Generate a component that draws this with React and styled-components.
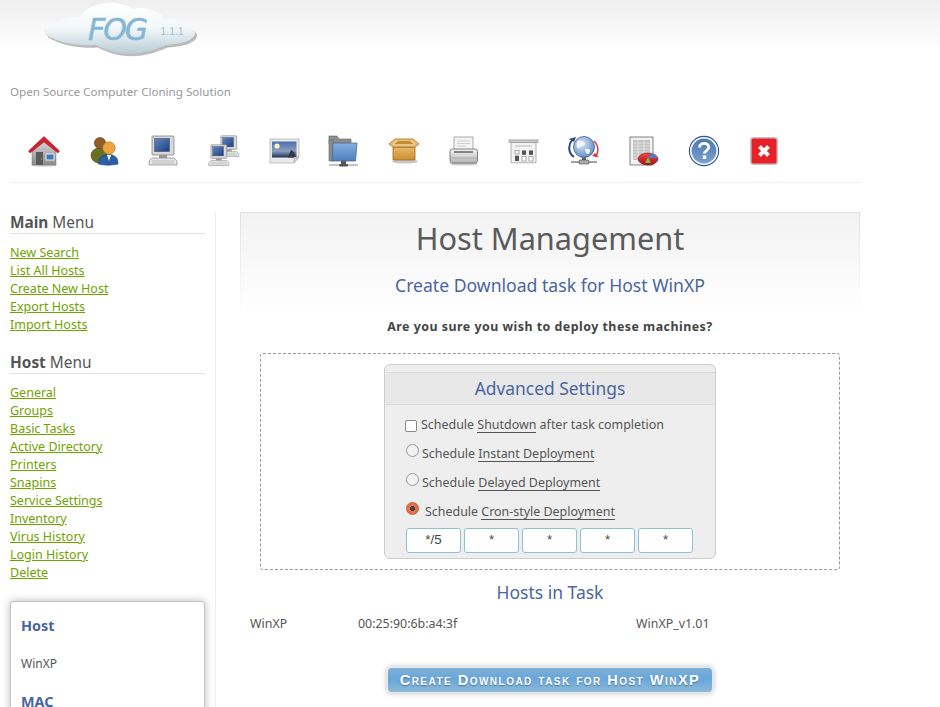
import React from "react";
import styled, { createGlobalStyle } from "styled-components";

const Global = createGlobalStyle`
  html, body { margin: 0; padding: 0; height: 100%; overflow: hidden; background: #fff; }
  body { font-family: "Noto Sans", "Open Sans", "DejaVu Sans", sans-serif; color: #555; font-size: 13px; }
  #root { height: 100%; }
`;

const Page = styled.div`
  height: 707px; overflow: hidden;
  background: linear-gradient(#eeeeee 0, #ffffff 50px) no-repeat;
  padding: 0 80px 0 10px;
`;
const Header = styled.header`
  height: 183px; display: flex; flex-direction: column;
  border-bottom: 1px solid #eeeeee;
  box-sizing: border-box;
`;
const LogoWrap = styled.div`margin: 0 0 0 32px; height: 62px;`;
const Tagline = styled.div`
  font-size: 11.6px; line-height: 18px; color: #999; margin-top: 21px;
`;
const IconBar = styled.nav`
  display: flex; margin: 34px 0 0 18px; gap: 28px;
`;
const IconLink = styled.a`display: block; width: 32px; height: 32px;`;

const Body = styled.div`display: flex; margin-top: 29px;`;
const Side = styled.aside`
  flex: none; box-sizing: border-box; padding-right: 10px; width: 206px;
  border-right: 1px solid #eeeeee; min-height: 520px;
`;
const MenuTitle = styled.h3`
  margin: 0 0 10px; padding: 0; width: 195px; font-size: 15.4px; line-height: 22px; font-weight: 400; color: #555;
  border-bottom: 1px solid #e2e2e2; height: 21px;
  b { font-weight: 700; }
`;
const MenuList = styled.ul`
  list-style: none; margin: 0 0 18px; padding: 0;
`;
const MenuLink = styled.li`
  height: 18px; line-height: 18px; font-size: 12.5px; color: #6fa300; text-decoration: underline;
`;
const Card = styled.div`
  margin-top: 19px; width: 195px; box-sizing: border-box; height: 200px; padding: 14px 10px;
  background: #fff; border: 1px solid #c4c4c4; border-radius: 3px;
  box-shadow: 0 0 8px rgba(0,0,0,.28);
`;
const CardHead = styled.div`
  font-size: 14.4px; line-height: 20px; font-weight: 700; color: #4a65a0;
`;
const CardValue = styled.div`
  font-size: 12px; line-height: 18px; color: #555; margin: 19px 0 19px;
`;

const Main = styled.main`
  width: 620px; margin-left: 24px; flex: none; text-align: center;
`;
const TitleBox = styled.div`
  height: 103px; box-sizing: border-box;
  border: 1px solid #e4e4e4; border-bottom: 0;
  border-image: linear-gradient(#e0e0e0, #ffffff) 1;
  background: linear-gradient(#f2f2f2, #ffffff);
  padding-top: 5px;
`;
const Title = styled.h1`
  margin: 0; font-size: 30.7px; line-height: 40px; font-weight: 400; color: #5a5a5a;
`;
const Sub = styled.h2`
  margin: 14px 0 0; font-size: 17.6px; line-height: 26px; font-weight: 400; color: #4a65a0;
`;
const Confirm = styled.p`
  margin: 3px 0 17px; font-size: 12.4px; line-height: 18px; font-weight: 700; color: #444; letter-spacing: .49px;
`;
const Dashed = styled.div`
  margin: 0 20px; height: 217px; box-sizing: border-box; padding-top: 10px;
  border: 1px dashed #999; border-radius: 3px;
`;
const Panel = styled.div`
  width: 332px; height: 195px; margin: 0 auto; box-sizing: border-box; padding-top: 7px;
  background: #eeeeee; border: 1px solid #cccccc; border-radius: 6px; text-align: left;
`;
const PanelHead = styled.div`
  height: 31px; line-height: 31px; text-align: center; font-size: 17.4px; color: #4a65a0;
  background: #e8e8e8; border-top: 1px solid #dcdcdc; border-bottom: 1px solid #dcdcdc;
`;
const Options = styled.div`padding: 10px 0 0 21px; display: flex; flex-direction: column;`;
const Option = styled.label`
  height: 29px; display: flex; align-items: flex-start; font-size: 12.45px; line-height: 20px; color: #555;
  gap: ${p => p.$gap}px;
`;
const Check = styled.span`
  width: 10px; height: 10px; margin: 5px 0 0 -1px; background: #fff; border: 1px solid #888; border-radius: 2px; flex: none;
`;
const Radio = styled.span`
  width: 11px; height: 11px; margin-top: 0; border-radius: 50%; flex: none; background: #f2f2f2; border: 1px solid #999;
  ${p => p.$on && `
    background: radial-gradient(circle, #444 0 2.2px, #e2714a 2.8px);
    border-color: #cc5c36;
  `}
`;
const Under = styled.span`
  display: inline-block; line-height: 15px; border-bottom: 1px solid #555;
`;
const CronRow = styled.div`display: flex; gap: 3px; margin-top: -3px;`;
const Cron = styled.div`
  width: 55px; height: 25px; box-sizing: border-box; background: #fff; border: 1px solid #8cc1d6; border-radius: 3px;
  font: 13.3px/22px "Liberation Sans", Arial, sans-serif; color: #444; text-align: center;
`;
const HostsHead = styled.h2`
  margin: 9px 0 0; font-size: 17.5px; line-height: 26px; font-weight: 400; color: #4a65a0;
`;
const HostRow = styled.div`
  display: grid; grid-template-columns: 108px 278px 1fr; margin-top: 9px; padding-left: 10px; text-align: left;
  font-size: 12.4px; line-height: 20px; color: #555; height: 20px;
`;
const SubmitBtn = styled.button`
  display: block; margin: 32px 0 0 146px; width: 328px; height: 28px; padding: 0;
  font: 700 14.6px/24px "Liberation Sans", Arial, sans-serif; font-variant: small-caps; letter-spacing: 1.47px;
  color: #fff; text-shadow: 0 1px 1px rgba(0,0,0,.35);
  background: linear-gradient(#7fb0d6, #68a6dc 45%, #8dbad6);
  border: 2px solid #e6e6e6; border-radius: 6px; box-shadow: 0 0 5px rgba(0,0,0,.22);
  white-space: nowrap;
`;

const cloud = "M2 30C4 24 20 18 38 17C42 9 52 4 66 3C76 2 86 6 92 9C102 6 116 10 122 18C136 20 150 25 153 32C154 40 140 44 124 45C112 50 96 56 78 53C68 52 60 48 54 45C40 46 22 44 10 38C5 36 2 33 2 30Z";

const Logo = () => (
  <svg width="160" height="62" viewBox="0 0 160 62">
    <defs>
      <linearGradient id="cl" x1="0" y1="0" x2="0" y2="1">
        <stop offset="0" stopColor="#ffffff" /><stop offset=".5" stopColor="#f2f7f9" /><stop offset="1" stopColor="#b9cdd6" />
      </linearGradient>
    </defs>
    <path transform="translate(2 2.5)" fill="#8f8f8f" opacity=".6" d={cloud} />
    <path fill="url(#cl)" d={cloud} />
    <text x="46" y="40" fontFamily="DejaVu Sans" fontStyle="italic" fontSize="30" fill="#86b6d5" stroke="#86b6d5" strokeWidth=".5" textLength="60" lengthAdjust="spacing">FOG</text>
    <text x="118.5" y="35" fontFamily="Liberation Sans" fontSize="10" fill="#a3bfcd" letterSpacing=".2">1.1.1</text>
  </svg>
);

const I = ({ children }) => <IconLink><svg width="32" height="32" viewBox="0 0 32 32">{children}</svg></IconLink>;

const Home = () => (
  <I>
    <defs><linearGradient id="hw" x1="0" y1="0" x2="0" y2="1"><stop offset="0" stopColor="#d8d8d8" /><stop offset="1" stopColor="#8c8c8c" /></linearGradient></defs>
    <ellipse cx="16" cy="30" rx="13" ry="1.6" fill="#ccc" />
    <path d="M4 14 16 5 28 14V30H4Z" fill="url(#hw)" stroke="#777" strokeWidth=".5" />
    <path d="M0.5 16 16 1.5 31.5 16 30 18 16 7 2 18Z" fill="#d3212c" stroke="#a51520" strokeWidth=".5" />
    <rect x="8" y="17" width="7" height="13" fill="#5b5b5b" />
    <rect x="18" y="19" width="8" height="6" fill="#3f78b8" stroke="#e8e8e8" />
    <circle cx="13.5" cy="24" r=".6" fill="#d8c24a" />
  </I>
);
const Users = () => (
  <I>
    <ellipse cx="11" cy="20.5" rx="8" ry="7.5" fill="#66701e" stroke="#444c12" strokeWidth=".6" />
    <circle cx="12" cy="8" r="5.6" fill="#8f5e22" stroke="#5e3c12" strokeWidth=".6" />
    <path d="M10.5 29C10.5 22 14 19.5 21 19.5C27 19.5 30 23 30 29C24 30.5 16 30.5 10.5 29Z" fill="#2a5ea6" stroke="#1c3f75" strokeWidth=".6" />
    <path d="M19 20 21 26 23 20Z" fill="#fff" />
    <circle cx="21" cy="13" r="6.2" fill="#eda43e" stroke="#b4741e" strokeWidth=".6" />
  </I>
);
const Monitor = ({ id, x = 0, y = 0, s = 1 }) => (
  <g transform={`translate(${x} ${y}) scale(${s})`}>
    <rect x="4" y="1" width="22" height="19" rx="1" fill="#d8d8d8" stroke="#777" strokeWidth=".7" />
    <rect x="6.5" y="3.5" width="15" height="13" fill={`url(#${id})`} stroke="#444" strokeWidth=".5" />
    <rect x="11" y="20" width="8" height="3" fill="#999" />
    <path d="M1 26 4 23H26L29 26V30H1Z" fill="#e4e4e4" stroke="#888" strokeWidth=".7" />
    <path d="M4 26H26M4 28H26" stroke="#aaa" strokeWidth=".6" />
    <defs><linearGradient id={id} x1="0" y1="0" x2="1" y2="1"><stop offset="0" stopColor="#5e86c4" /><stop offset="1" stopColor="#1f3f82" /></linearGradient></defs>
  </g>
);
const Host = () => <I><Monitor id="m1" /></I>;
const Group = () => (
  <I>
    <Monitor id="m2" x={10} y={0} s={0.72} />
    <Monitor id="m3" x={0} y={9} s={0.72} />
  </I>
);
const Image = () => (
  <I>
    <defs>
      <linearGradient id="im" x1="0" y1="0" x2="0" y2="1"><stop offset="0" stopColor="#4d6ea8" /><stop offset=".6" stopColor="#8a9cc0" /><stop offset="1" stopColor="#1f2f55" /></linearGradient>
    </defs>
    <path d="M2 4H31V22L26 28H2Z" fill="#eaeaea" stroke="#aaa" strokeWidth=".7" />
    <rect x="4" y="6.5" width="24.5" height="16" fill="url(#im)" />
    <circle cx="9" cy="11" r="2.6" fill="#f4f6c8" />
    <path d="M20 22.5 23 15 26 17 28 22.5Z" fill="#33384a" />
    <path d="M26 28 31 22H26Z" fill="#ccc" stroke="#999" strokeWidth=".4" />
  </I>
);
const Folder = () => (
  <I>
    <defs><linearGradient id="fo" x1="0" y1="0" x2="0" y2="1"><stop offset="0" stopColor="#86afe0" /><stop offset="1" stopColor="#4d7fbe" /></linearGradient></defs>
    <path d="M1 1H9L11 4H23V9H1Z" fill="#8c8c8c" stroke="#666" strokeWidth=".6" />
    <rect x="1" y="5" width="4" height="21" fill="#8c8c8c" stroke="#666" strokeWidth=".6" />
    <path d="M5 8H29L27.5 26H4Z" fill="url(#fo)" stroke="#3a5f92" strokeWidth=".7" />
    <rect x="13" y="26" width="5" height="3" fill="#555" />
    <path d="M1 30H30" stroke="#888" strokeWidth="1" />
    <rect x="11" y="29" width="9" height="2.4" rx="1" fill="#555" />
  </I>
);
const Box = () => (
  <I>
    <defs><linearGradient id="bx" x1="0" y1="0" x2="0" y2="1"><stop offset="0" stopColor="#e9b968" /><stop offset="1" stopColor="#cc8f30" /></linearGradient></defs>
    <ellipse cx="17" cy="26.5" rx="13" ry="2" fill="#c8c8c8" />
    <path d="M5 12H27V25H5Z" fill="url(#bx)" stroke="#a06d1c" strokeWidth=".8" />
    <path d="M5 12 1 9 7 4H25L31 9 27 12Z" fill="#eac581" stroke="#a06d1c" strokeWidth=".8" />
    <path d="M7 9H25L22 6H10Z" fill="#c48a32" />
  </I>
);
const Printer = () => (
  <I>
    <defs><linearGradient id="pr" x1="0" y1="0" x2="0" y2="1"><stop offset="0" stopColor="#f4f4f4" /><stop offset="1" stopColor="#b4b4b4" /></linearGradient></defs>
    <ellipse cx="16" cy="29" rx="14" ry="1.6" fill="#ccc" />
    <path d="M6 2H25V15H6Z" fill="#f4f4f4" stroke="#888" strokeWidth=".7" />
    <path d="M9 6H22M9 8.5H22M9 11H18" stroke="#ccc" strokeWidth=".9" />
    <rect x="2" y="14" width="27.5" height="14" rx="2.4" fill="url(#pr)" stroke="#666" strokeWidth=".8" />
    <path d="M6 17H25" stroke="#444" strokeWidth="1.2" />
    <path d="M3 23H29" stroke="#999" strokeWidth=".6" />
  </I>
);
const Config = () => (
  <I>
    <g transform="translate(0 4) scale(1 .88)">
      <path d="M1 1H30V4H1Z" fill="#c8c8c8" stroke="#888" strokeWidth=".6" />
      <path d="M3 4H28V27H3Z" fill="#f2f2f2" stroke="#999" strokeWidth=".8" />
      <path d="M7 8H24" stroke="#bbb" strokeWidth="1" />
      <rect x="7" y="13" width="4" height="4" fill="#fff" stroke="#888" strokeWidth=".7" />
      <rect x="7" y="19" width="4" height="6" fill="#555" />
      <rect x="14" y="13" width="4" height="5" fill="#555" />
      <rect x="14" y="20" width="4" height="5" fill="#fff" stroke="#888" strokeWidth=".7" />
      <rect x="21" y="13" width="4" height="5" fill="#555" />
      <rect x="21" y="20" width="4" height="5" fill="#fff" stroke="#888" strokeWidth=".7" />
    </g>
  </I>
);
const Globe = () => (
  <I>
    <defs><radialGradient id="gl" cx=".4" cy=".35" r=".8"><stop offset="0" stopColor="#dbe8f7" /><stop offset="1" stopColor="#4b7bc0" /></radialGradient></defs>
    <path d="M4 5C0 10 0 18 6 22" fill="none" stroke="#27477f" strokeWidth="2" />
    <path d="M1 4 8 2 6 7Z" fill="#27477f" />
    <path d="M26 6C31 11 31 18 27 22" fill="none" stroke="#d8383a" strokeWidth="1.4" />
    <path d="M24 21 31 22 27 18Z" fill="#d8383a" />
    <circle cx="16" cy="12" r="10.5" fill="url(#gl)" stroke="#2b4d86" strokeWidth=".7" />
    <path d="M10 6C13 5 17 6 17 9C15 12 12 11 11 14C8 12 8 8 10 6ZM17 14C20 13 23 14 22 17C20 20 18 20 17 14Z" fill="#f4f6fa" />
    <rect x="14" y="22" width="4" height="3" fill="#666" />
    <rect x="11" y="25" width="10" height="4" rx="1" fill="#aaa" stroke="#444" strokeWidth=".6" />
    <path d="M3 27H11M21 27H29" stroke="#444" strokeWidth="1" />
  </I>
);
const Report = () => (
  <I>
    <defs><linearGradient id="rp" x1="0" y1="0" x2="0" y2="1"><stop offset="0" stopColor="#ef4a4a" /><stop offset="1" stopColor="#a80f14" /></linearGradient></defs>
    <rect x="2" y="2" width="23" height="28" fill="#f2f2f2" stroke="#666" strokeWidth=".8" />
    <path d="M5 5H22V25H5Z" fill="#c0c0c0" />
    <path d="M5 8H22M5 11H22M5 14H22M5 17H22M5 20H22M5 23H22M10 5V25M16 5V25" stroke="#efefef" strokeWidth=".7" />
    <ellipse cx="20" cy="24" rx="10" ry="6" fill="url(#rp)" stroke="#7e0b0f" strokeWidth=".6" />
    <path d="M20 23 29.5 23C29.5 20 25 18.5 23 18.5Z" fill="#4d7fbe" />
    <path d="M17 28 20 22 23 28Z" fill="#7ab648" />
  </I>
);
const Help = () => (
  <I>
    <defs><linearGradient id="he" x1="0" y1="0" x2="0" y2="1"><stop offset="0" stopColor="#4c79b3" /><stop offset="1" stopColor="#7ba0cb" /></linearGradient></defs>
    <circle cx="16" cy="16" r="14.6" fill="#fff" stroke="#2c5596" strokeWidth="1.1" />
    <circle cx="16" cy="16" r="12.4" fill="url(#he)" />
    <path d="M11.5 12.5C11.5 9.5 14 8.3 16 8.3C18.6 8.3 20.7 10 20.7 12.3C20.7 15.5 16.5 15.5 16.5 18.6" fill="none" stroke="#fff" strokeWidth="2.8" />
    <rect x="14.8" y="20.4" width="3.4" height="3.4" fill="#fff" />
  </I>
);
const Logout = () => (
  <I>
    <rect x="2.8" y="2.8" width="26.5" height="26.5" rx="2.5" fill="#e82027" stroke="#c4c4c4" strokeWidth="1.6" />
    <path d="M11.5 11.5 20.5 20.5M20.5 11.5 11.5 20.5" stroke="#fff" strokeWidth="4" />
  </I>
);

const mainLinks = ["New Search", "List All Hosts", "Create New Host", "Export Hosts", "Import Hosts"];
const hostLinks = ["General", "Groups", "Basic Tasks", "Active Directory", "Printers", "Snapins", "Service Settings", "Inventory", "Virus History", "Login History", "Delete"];

export default function App() {
  return (
    <Page>
      <Global />
      <Header>
        <LogoWrap><Logo /></LogoWrap>
        <Tagline>Open Source Computer Cloning Solution</Tagline>
        <IconBar>
          <Home /><Users /><Host /><Group /><Image /><Folder /><Box /><Printer /><Config /><Globe /><Report /><Help /><Logout />
        </IconBar>
      </Header>
      <Body>
        <Side>
          <MenuTitle><b>Main</b> Menu</MenuTitle>
          <MenuList>{mainLinks.map(l => <MenuLink key={l}>{l}</MenuLink>)}</MenuList>
          <MenuTitle><b>Host</b> Menu</MenuTitle>
          <MenuList>{hostLinks.map(l => <MenuLink key={l}>{l}</MenuLink>)}</MenuList>
          <Card>
            <CardHead>Host</CardHead>
            <CardValue>WinXP</CardValue>
            <CardHead>MAC</CardHead>
          </Card>
        </Side>
        <Main>
          <TitleBox>
            <Title>Host Management</Title>
            <Sub>Create Download task for Host WinXP</Sub>
          </TitleBox>
          <Confirm>Are you sure you wish to deploy these machines?</Confirm>
          <Dashed>
            <Panel>
              <PanelHead>Advanced Settings</PanelHead>
              <Options>
                <Option $gap={4}><Check /><span>Schedule <Under>Shutdown</Under> after task completion</span></Option>
                <Option $gap={3}><Radio /><span>Schedule <Under>Instant Deployment</Under></span></Option>
                <Option $gap={3}><Radio /><span>Schedule <Under>Delayed Deployment</Under></span></Option>
                <Option $gap={6}><Radio $on /><span>Schedule <Under>Cron-style Deployment</Under></span></Option>
                <CronRow>
                  <Cron>*/5</Cron><Cron>*</Cron><Cron>*</Cron><Cron>*</Cron><Cron>*</Cron>
                </CronRow>
              </Options>
            </Panel>
          </Dashed>
          <HostsHead>Hosts in Task</HostsHead>
          <HostRow><span>WinXP</span><span>00:25:90:6b:a4:3f</span><span>WinXP_v1.01</span></HostRow>
          <SubmitBtn>Create Download task for Host WinXP</SubmitBtn>
        </Main>
      </Body>
    </Page>
  );
}
